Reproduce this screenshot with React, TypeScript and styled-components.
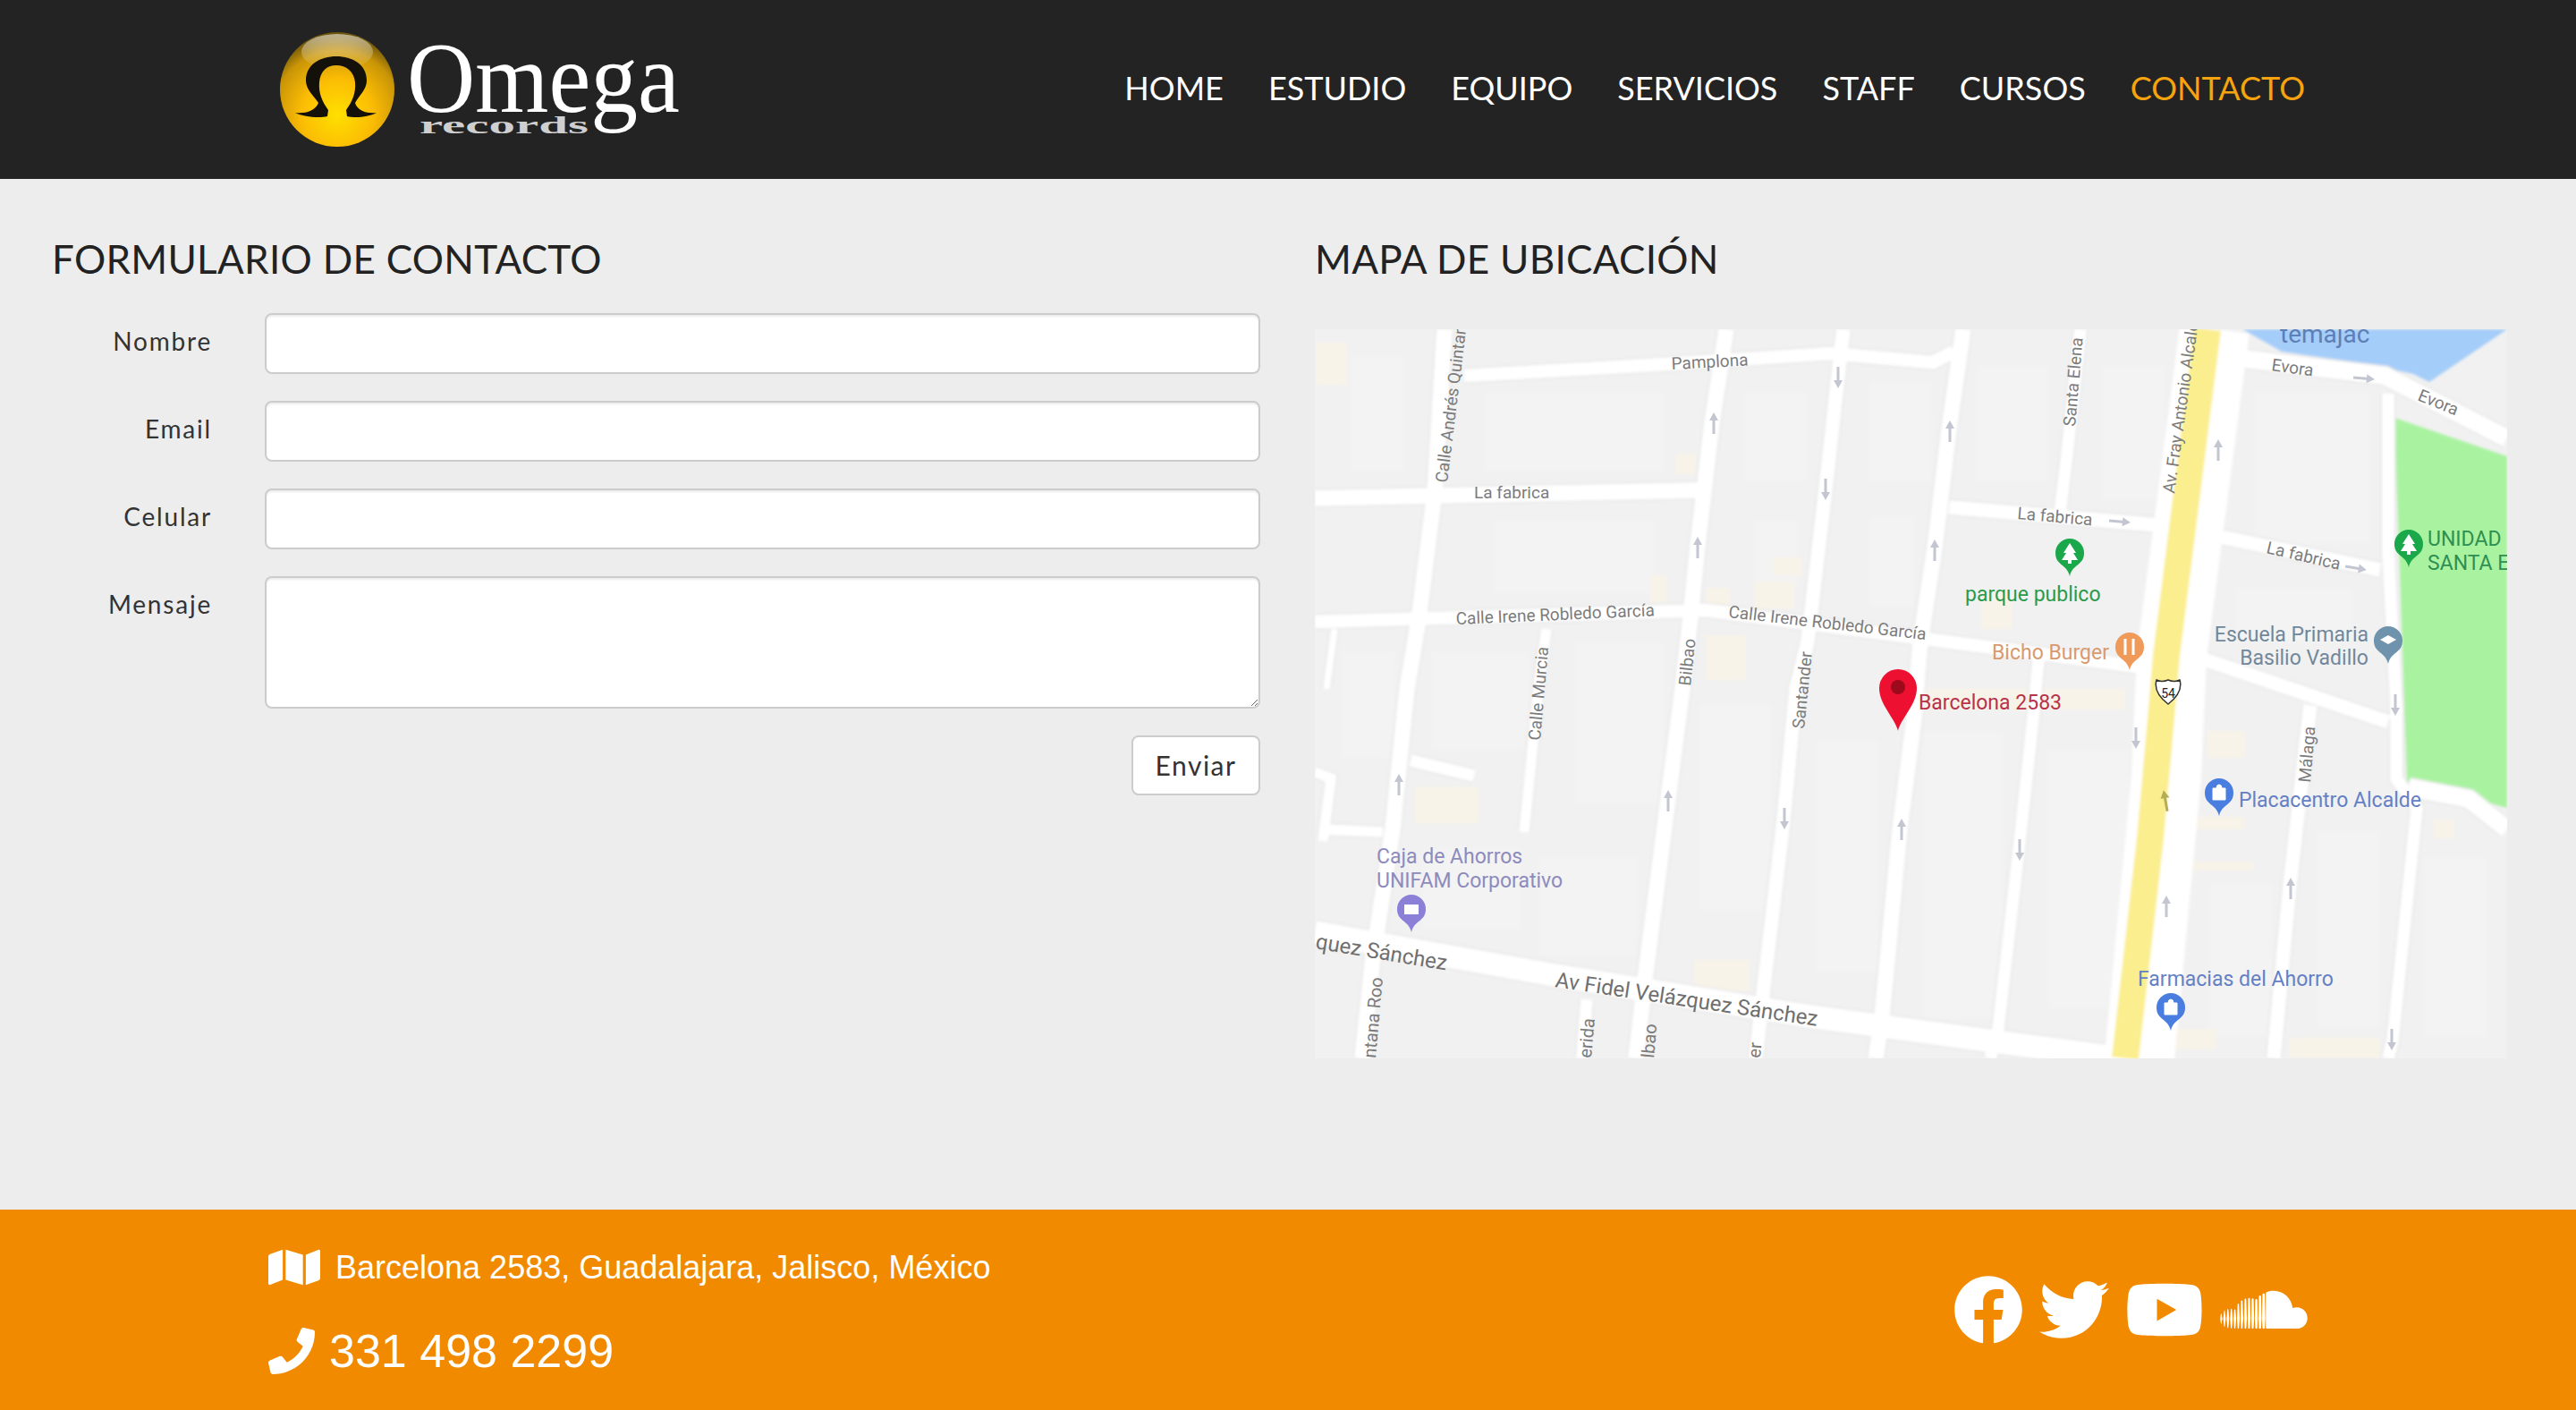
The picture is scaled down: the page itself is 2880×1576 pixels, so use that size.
import React from "react";
import styled, { createGlobalStyle } from "styled-components";
import {
  FaFacebook,
  FaMap,
  FaPhone,
  FaSoundcloud,
  FaTwitter,
  FaYoutube,
} from "react-icons/fa";

const GlobalStyle = createGlobalStyle`
  html, body {
    margin: 0;
    padding: 0;
    background: #ededed;
  }
  * {
    box-sizing: border-box;
  }
`;

const Page = styled.div`
  width: 2880px;
  height: 1576px;
  display: flex;
  flex-direction: column;
  font-family: "Lato", "Liberation Sans", sans-serif;
  overflow: hidden;
`;

const Header = styled.header`
  height: 200px;
  flex: none;
  background: #232323;
  display: flex;
  align-items: center;
  justify-content: space-between;
  padding: 0 303px 0 312px;
`;

const Logo = styled.svg`
  width: 460px;
  height: 200px;
  display: block;
`;

const Nav = styled.nav`
  display: flex;
  align-items: center;
  gap: 50px;
  margin-top: -4px;
`;

const NavLink = styled.a<{ $active?: boolean }>`
  color: ${(p) => (p.$active ? "#f7a30f" : "#fff")};
  font-size: 36px;
  line-height: 1;
  text-decoration: none;
`;

const Main = styled.main`
  flex: 1;
  display: grid;
  grid-template-columns: 1440px 1440px;
`;

const Column = styled.section`
  padding: 64px 31px 0 58px;
`;

const MapColumn = styled(Column)`
  padding: 64px 78px 0 30px;
`;

const Title = styled.h2`
  margin: 0;
  color: #222;
  font-size: 44px;
  font-weight: 400;
  line-height: 50px;
  letter-spacing: 0.3px;
`;

const Form = styled.form`
  margin-top: 36px;
  display: flex;
  flex-direction: column;
  gap: 30px;
`;

const Row = styled.div`
  display: grid;
  grid-template-columns: 179px 1113px;
  column-gap: 59px;
`;

const Label = styled.label`
  color: #333;
  font-size: 28px;
  line-height: 40px;
  padding-top: 11px;
  text-align: right;
  letter-spacing: 1.8px;
`;

const Input = styled.input`
  display: block;
  width: 100%;
  height: 68px;
  background: #fff;
  border: 2px solid #ccc;
  border-radius: 8px;
  box-shadow: inset 0 2px 2px rgba(0, 0, 0, 0.075);
  outline: none;
`;

const TextArea = styled.textarea`
  display: block;
  width: 100%;
  height: 148px;
  background: #fff;
  border: 2px solid #ccc;
  border-radius: 8px;
  box-shadow: inset 0 2px 2px rgba(0, 0, 0, 0.075);
  outline: none;
`;

const Actions = styled.div`
  display: flex;
  justify-content: flex-end;
`;

const SendButton = styled.button`
  width: 144px;
  height: 67px;
  padding: 0 0 2px;
  background: #fff;
  border: 2px solid #ccc;
  border-radius: 8px;
  color: #333;
  font-family: inherit;
  font-size: 30px;
  letter-spacing: 1.5px;
`;

const MapFrame = styled.svg`
  display: block;
  width: 1333px;
  height: 815px;
  margin-top: 54px;
  background: #f1f1f1;
  font-family: "Roboto", sans-serif;
`;

const MapText = styled.text<{ $color?: string; $size?: number }>`
  fill: ${(p) => p.$color ?? "#7c7c7c"};
  font-size: ${(p) => p.$size ?? 20}px;
`;

const Footer = styled.footer`
  height: 224px;
  flex: none;
  background: #f28a00;
  color: #fff;
  display: flex;
  align-items: center;
  justify-content: space-between;
  padding: 0 300px;
  font-family: "Liberation Sans", Arial, sans-serif;
`;

const Contact = styled.div`
  display: flex;
  flex-direction: column;
  gap: 45px;
  margin-top: 1px;
`;

const ContactLine = styled.div<{ $large?: boolean }>`
  display: flex;
  align-items: center;
  gap: ${(p) => (p.$large ? 16 : 17)}px;
  font-size: ${(p) => (p.$large ? 52 : 36)}px;
  line-height: ${(p) => (p.$large ? 52 : 45)}px;
`;

const MapIcon = styled(FaMap)`
  width: 58px;
  height: 45px;
`;

const PhoneIcon = styled(FaPhone)`
  width: 52px;
  height: 52px;
`;

const Socials = styled.div`
  display: flex;
  align-items: center;
  gap: 18px;
  line-height: 0;
`;

const FacebookIcon = styled(FaFacebook)`
  width: 78px;
  height: 78px;
`;

const TwitterIcon = styled(FaTwitter)`
  width: 78px;
  height: 78px;
`;

const YoutubeIcon = styled(FaYoutube)`
  width: 88px;
  height: 78px;
`;

const SoundcloudIcon = styled(FaSoundcloud)`
  width: 98px;
  height: 78px;
`;

const roads: { points: string; w: number }[] = [
  { points: "145,0 134,182 116,325 103,402 87,559 65,702 53,815", w: 18 },
  { points: "460,0 444,105 428,242 420,322 411,402 395,525 370,719 359,815", w: 18 },
  { points: "591,0 585,52 571,179 551,349 538,402 524,549 502,735 493,815", w: 16 },
  { points: "725,0 709,112 693,245 677,349 670,435 654,559 634,769 627,815", w: 18 },
  { points: "856,0 840,149 833,205", w: 14 },
  { points: "810,359 803,435 787,582 764,782 755,815", w: 14 },
  { points: "1113,420 1090,622 1072,815", w: 16 },
  { points: "1200,72 1200,249 1209,422 1209,502 1232,535 1205,795 1200,815", w: 14 },
  { points: "167,52 393,39 576,27 691,37 714,25", w: 15 },
  { points: "0,189 134,186 428,180", w: 18 },
  { points: "0,327 411,315 437,314 674,345 934,379", w: 15 },
  { points: "709,199 943,219 998,229 1191,269", w: 16 },
  { points: "1030,32 1196,52 1333,122", w: 20 },
  { points: "994,369 1200,439", w: 16 },
  { points: "1223,512 1290,525 1333,559", w: 20 },
  { points: "0,674 268,722 553,768 953,822", w: 26 },
  { points: "107,482 178,499", w: 14 },
  { points: "259,335 250,402 234,562", w: 12 },
  { points: "0,495 18,502 9,572", w: 12 },
  { points: "9,559 76,562", w: 12 },
  { points: "22,335 13,402", w: 8 },
  { points: "304,749 299,815", w: 14 },
];

const tanPatches = [
  [2, 15, 34, 47],
  [404, 139, 22, 23],
  [513, 255, 31, 20],
  [437, 289, 27, 23],
  [375, 275, 18, 30],
  [491, 282, 45, 30],
  [437, 342, 45, 50],
  [112, 512, 71, 40],
  [424, 705, 62, 34],
  [998, 449, 42, 30],
  [984, 545, 56, 14],
  [980, 595, 69, 10],
  [952, 782, 55, 23],
  [1090, 792, 101, 23],
  [1251, 549, 23, 20],
  [677, 402, 229, 23],
  [745, 295, 35, 40],
];

const buildings = [
  [40, 30, 60, 130],
  [190, 70, 200, 90],
  [200, 215, 180, 80],
  [480, 70, 70, 100],
  [490, 215, 50, 70],
  [620, 60, 70, 110],
  [620, 210, 50, 100],
  [740, 40, 80, 130],
  [880, 40, 70, 150],
  [1050, 70, 130, 170],
  [1030, 290, 130, 60],
  [30, 360, 60, 120],
  [130, 360, 110, 110],
  [290, 350, 100, 180],
  [430, 420, 80, 230],
  [560, 460, 70, 260],
  [680, 450, 90, 320],
  [820, 470, 90, 290],
  [1000, 620, 70, 170],
  [1120, 560, 70, 220],
  [1240, 590, 70, 200],
  [120, 580, 110, 90],
  [250, 590, 110, 110],
];

const arrows: { x: number; y: number; dir: number; color?: string }[] = [
  { x: 446, y: 105, dir: 0 },
  { x: 428, y: 244, dir: 0 },
  { x: 710, y: 114, dir: 0 },
  { x: 693, y: 247, dir: 0 },
  { x: 1010, y: 135, dir: 0 },
  { x: 94, y: 509, dir: 0 },
  { x: 395, y: 527, dir: 0 },
  { x: 656, y: 559, dir: 0 },
  { x: 952, y: 645, dir: 0 },
  { x: 1091, y: 625, dir: 0 },
  { x: 585, y: 54, dir: 180 },
  { x: 571, y: 179, dir: 180 },
  { x: 525, y: 547, dir: 180 },
  { x: 918, y: 457, dir: 180 },
  { x: 788, y: 582, dir: 180 },
  { x: 1208, y: 420, dir: 180 },
  { x: 1204, y: 794, dir: 180 },
  { x: 1173, y: 55, dir: 95 },
  { x: 900, y: 215, dir: 95 },
  { x: 1164, y: 267, dir: 100 },
  { x: 951, y: 527, dir: -10, color: "#b5ad55" },
];

const labels: { x: number; y: number; t: string; rot?: number; color?: string; size?: number; end?: boolean }[] = [
  { x: 399, y: 45, t: "Pamplona", rot: -3, size: 19 },
  { x: 178, y: 189, t: "La fabrica", size: 19 },
  { x: 158, y: 330, t: "Calle Irene Robledo García", rot: -2.5, size: 19 },
  { x: 462, y: 322, t: "Calle Irene Robledo García", rot: 6.5, size: 19 },
  { x: 785, y: 212, t: "La fabrica", rot: 5, size: 19 },
  { x: 1063, y: 250, t: "La fabrica", rot: 13, size: 19 },
  { x: 1069, y: 46, t: "Evora", rot: 8, size: 19 },
  { x: 1232, y: 79, t: "Evora", rot: 22, size: 19 },
  { x: 148, y: 172, t: "Calle Andrés Quintana Roo", rot: -83, size: 19 },
  { x: 252, y: 460, t: "Calle Murcia", rot: -85, size: 19 },
  { x: 420, y: 399, t: "Bilbao", rot: -84, size: 19 },
  { x: 547, y: 447, t: "Santander", rot: -84, size: 19 },
  { x: 850, y: 109, t: "Santa Elena", rot: -85, size: 19 },
  { x: 961, y: 184, t: "Av. Fray Antonio Alcalde", rot: -82, size: 19 },
  { x: 1113, y: 507, t: "Málaga", rot: -85, size: 19 },
  { x: 68, y: 815, t: "ntana Roo", rot: -85, size: 20 },
  { x: 309, y: 815, t: "erida", rot: -85, size: 20 },
  { x: 379, y: 815, t: "lbao", rot: -85, size: 20 },
  { x: 498, y: 815, t: "er", rot: -85, size: 20 },
  { x: 0, y: 692, t: "quez Sánchez", rot: 9.5, size: 24, color: "#6f6f6f" },
  { x: 268, y: 735, t: "Av Fidel Velázquez Sánchez", rot: 8.5, size: 24, color: "#6f6f6f" },
  { x: 1079, y: 15, t: "temajac", size: 28, color: "#5d7fb5" },
  { x: 675, y: 425, t: "Barcelona 2583", size: 23, color: "#b8324a" },
  { x: 727, y: 304, t: "parque publico", size: 23, color: "#2a9a4c" },
  { x: 757, y: 369, t: "Bicho Burger", size: 23, color: "#d99a70" },
  { x: 1178, y: 349, t: "Escuela Primaria", size: 23, color: "#71889c", end: true },
  { x: 1178, y: 375, t: "Basilio Vadillo", size: 23, color: "#71889c", end: true },
  { x: 1244, y: 242, t: "UNIDAD", size: 23, color: "#2e8f52" },
  { x: 1244, y: 269, t: "SANTA E", size: 23, color: "#2e8f52" },
  { x: 1033, y: 534, t: "Placacentro Alcalde", size: 23, color: "#6580c4" },
  { x: 920, y: 734, t: "Farmacias del Ahorro", size: 23, color: "#6580c4" },
  { x: 69, y: 597, t: "Caja de Ahorros", size: 23, color: "#8d8bbd" },
  { x: 69, y: 624, t: "UNIFAM Corporativo", size: 23, color: "#8d8bbd" },
];

function pinPath(cx: number, top: number, tip: number, r: number) {
  const c = top + r;
  return `M${cx},${tip} C${cx - 3},${tip - 14} ${cx - r},${c + r * 0.9} ${cx - r},${c} A${r},${r} 0 1 1 ${cx + r},${c} C${cx + r},${c + r * 0.9} ${cx + 3},${tip - 14} ${cx},${tip} Z`;
}

const Pin = ({
  x,
  top,
  color,
  glyph,
}: {
  x: number;
  top: number;
  color: string;
  glyph: "tree" | "bag" | "food" | "school" | "bank";
}) => (
  <g>
    <path d={pinPath(x, top, top + 42, 16)} fill={color} />
    {glyph === "tree" && <path d={`M${x},${top + 5} l7,11 h-3 l5,8 h-7 v4 h-4 v-4 h-7 l5,-8 h-3 z`} fill="#fff" />}
    {glyph === "bag" && <path d={`M${x - 7},${top + 11} h14 v13 h-14 z M${x - 3},${top + 11} a3,4 0 0 1 6,0`} fill="#fff" stroke="#fff" strokeWidth="1" />}
    {glyph === "food" && <path d={`M${x - 5},${top + 7} v18 M${x + 4},${top + 7} v18`} stroke="#fff" strokeWidth="3" />}
    {glyph === "school" && <path d={`M${x},${top + 10} l9,5 -9,5 -9,-5 z`} fill="#fff" />}
    {glyph === "bank" && <rect x={x - 8} y={top + 11} width={16} height={11} fill="#fff" />}
  </g>
);

const StreetMap = () => (
  <MapFrame viewBox="0 0 1333 815">
    <defs>
      <filter id="soft" x="-5%" y="-5%" width="110%" height="110%">
        <feGaussianBlur stdDeviation="1.8" />
      </filter>
    </defs>
    <g filter="url(#soft)">
      {buildings.map(([x, y, w, h]) => (
        <rect key={`b${x}-${y}`} x={x} y={y} width={w} height={h} fill="#f3f3f3" />
      ))}
      {tanPatches.map(([x, y, w, h]) => (
        <rect key={`t${x}-${y}`} x={x} y={y} width={w} height={h} fill="#f8f3e8" />
      ))}
      <polygon points="1037,0 1081,25 1177,39 1228,50 1246,59 1333,0" fill="#a5cdf9" />
      <polygon points="1207,99 1333,142 1333,535 1221,505" fill="#a9f3a0" />
      {roads.map((r) => (
        <polyline key={`e${r.points}`} points={r.points} fill="none" stroke="#e6e6e6" strokeWidth={r.w + 3} />
      ))}
      {roads.map((r) => (
        <polyline key={r.points} points={r.points} fill="none" stroke="#fff" strokeWidth={r.w} />
      ))}
      <polyline points="1006,0 958,365 952,500 922,815" fill="none" stroke="#fff" strokeWidth="78" />
      <polyline points="998,0 952,365 946,435 934,569 906,815" fill="none" stroke="#fbee8e" strokeWidth="30" />
    </g>
    {arrows.map((a) => (
      <path
        key={`a${a.x}-${a.y}`}
        transform={`translate(${a.x} ${a.y}) rotate(${a.dir})`}
        d="M0,-12 L5,-3 L1.5,-3 L1.5,12 L-1.5,12 L-1.5,-3 L-5,-3 Z"
        fill={a.color ?? "#c3c6d0"}
      />
    ))}
    {labels.map((l) => (
      <MapText
        key={`${l.t}-${l.x}`}
        x={l.x}
        y={l.y}
        $color={l.color}
        $size={l.size}
        textAnchor={l.end ? "end" : "start"}
        transform={l.rot ? `rotate(${l.rot} ${l.x} ${l.y})` : undefined}
      >
        {l.t}
      </MapText>
    ))}
    <Pin x={844} top={234} color="#1ba84a" glyph="tree" />
    <Pin x={1223} top={224} color="#1ba84a" glyph="tree" />
    <Pin x={1200} top={332} color="#6f93ad" glyph="school" />
    <Pin x={911} top={339} color="#f09a5a" glyph="food" />
    <Pin x={1011} top={502} color="#4a7de0" glyph="bag" />
    <Pin x={957} top={742} color="#4a7de0" glyph="bag" />
    <Pin x={108} top={632} color="#8a80d8" glyph="bank" />
    <path d={pinPath(652, 380, 449, 21)} fill="#ee1030" />
    <circle cx={652} cy={400} r={8} fill="#9c0a1c" />
    <path
      d="M941,392 q6,3 13,0 q7,3 13,0 q4,14 -13,27 q-17,-13 -13,-27 z"
      fill="#fff"
      stroke="#333"
      strokeWidth="1.5"
    />
    <MapText x={954} y={412} $size={14} $color="#222" textAnchor="middle">
      54
    </MapText>
  </MapFrame>
);

const LogoMark = () => (
  <Logo viewBox="0 0 460 200">
    <defs>
      <radialGradient id="ball" cx="50%" cy="72%" r="70%">
        <stop offset="0%" stopColor="#ffe000" />
        <stop offset="45%" stopColor="#fbbc04" />
        <stop offset="80%" stopColor="#c99507" />
        <stop offset="100%" stopColor="#6b540c" />
      </radialGradient>
      <linearGradient id="gloss" x1="0" y1="0" x2="0" y2="1">
        <stop offset="0%" stopColor="#fff" stopOpacity="0.55" />
        <stop offset="100%" stopColor="#fff" stopOpacity="0" />
      </linearGradient>
    </defs>
    <circle cx={65} cy={100} r={64} fill="url(#ball)" />
    <ellipse cx={65} cy={58} rx={40} ry={20} fill="url(#gloss)" />
    <path
      d="M18,126 C28,127 40,125 44,115 C38,106 30,100 30,90 C30,72 46,63 64,63 C82,63 98,72 98,90 C98,100 90,106 85,115 C88,125 100,127 109,126 C100,131 85,132 76,130 L75,123 C82,113 86,104 85,92 C84,80 75,73 64,73 C53,73 46,80 45,92 C44,104 48,113 55,123 L54,130 C45,132 28,131 18,126 Z"
      fill="#14110a"
    />
    <text x={143} y={125} fontFamily="'Liberation Serif', serif" fontSize="113" fill="#fff" textLength={305} lengthAdjust="spacingAndGlyphs">
      Omega
    </text>
    <text x={157} y={149} fontFamily="'Liberation Serif', serif" fontWeight="700" fontSize="28" fill="#cfcfcf" textLength={189} lengthAdjust="spacingAndGlyphs">
      records
    </text>
  </Logo>
);

export default function App() {
  return (
    <Page>
      <GlobalStyle />
      <Header>
        <LogoMark />
        <Nav>
          <NavLink>HOME</NavLink>
          <NavLink>ESTUDIO</NavLink>
          <NavLink>EQUIPO</NavLink>
          <NavLink>SERVICIOS</NavLink>
          <NavLink>STAFF</NavLink>
          <NavLink>CURSOS</NavLink>
          <NavLink $active>CONTACTO</NavLink>
        </Nav>
      </Header>
      <Main>
        <Column>
          <Title>FORMULARIO DE CONTACTO</Title>
          <Form>
            <Row>
              <Label>Nombre</Label>
              <Input type="text" />
            </Row>
            <Row>
              <Label>Email</Label>
              <Input type="email" />
            </Row>
            <Row>
              <Label>Celular</Label>
              <Input type="text" />
            </Row>
            <Row>
              <Label>Mensaje</Label>
              <TextArea />
            </Row>
            <Actions>
              <SendButton type="button">Enviar</SendButton>
            </Actions>
          </Form>
        </Column>
        <MapColumn>
          <Title>MAPA DE UBICACIÓN</Title>
          <StreetMap />
        </MapColumn>
      </Main>
      <Footer>
        <Contact>
          <ContactLine>
            <MapIcon preserveAspectRatio="none" />
            Barcelona 2583, Guadalajara, Jalisco, México
          </ContactLine>
          <ContactLine $large>
            <PhoneIcon />
            331 498 2299
          </ContactLine>
        </Contact>
        <Socials>
          <FacebookIcon />
          <TwitterIcon />
          <YoutubeIcon />
          <SoundcloudIcon />
        </Socials>
      </Footer>
    </Page>
  );
}
